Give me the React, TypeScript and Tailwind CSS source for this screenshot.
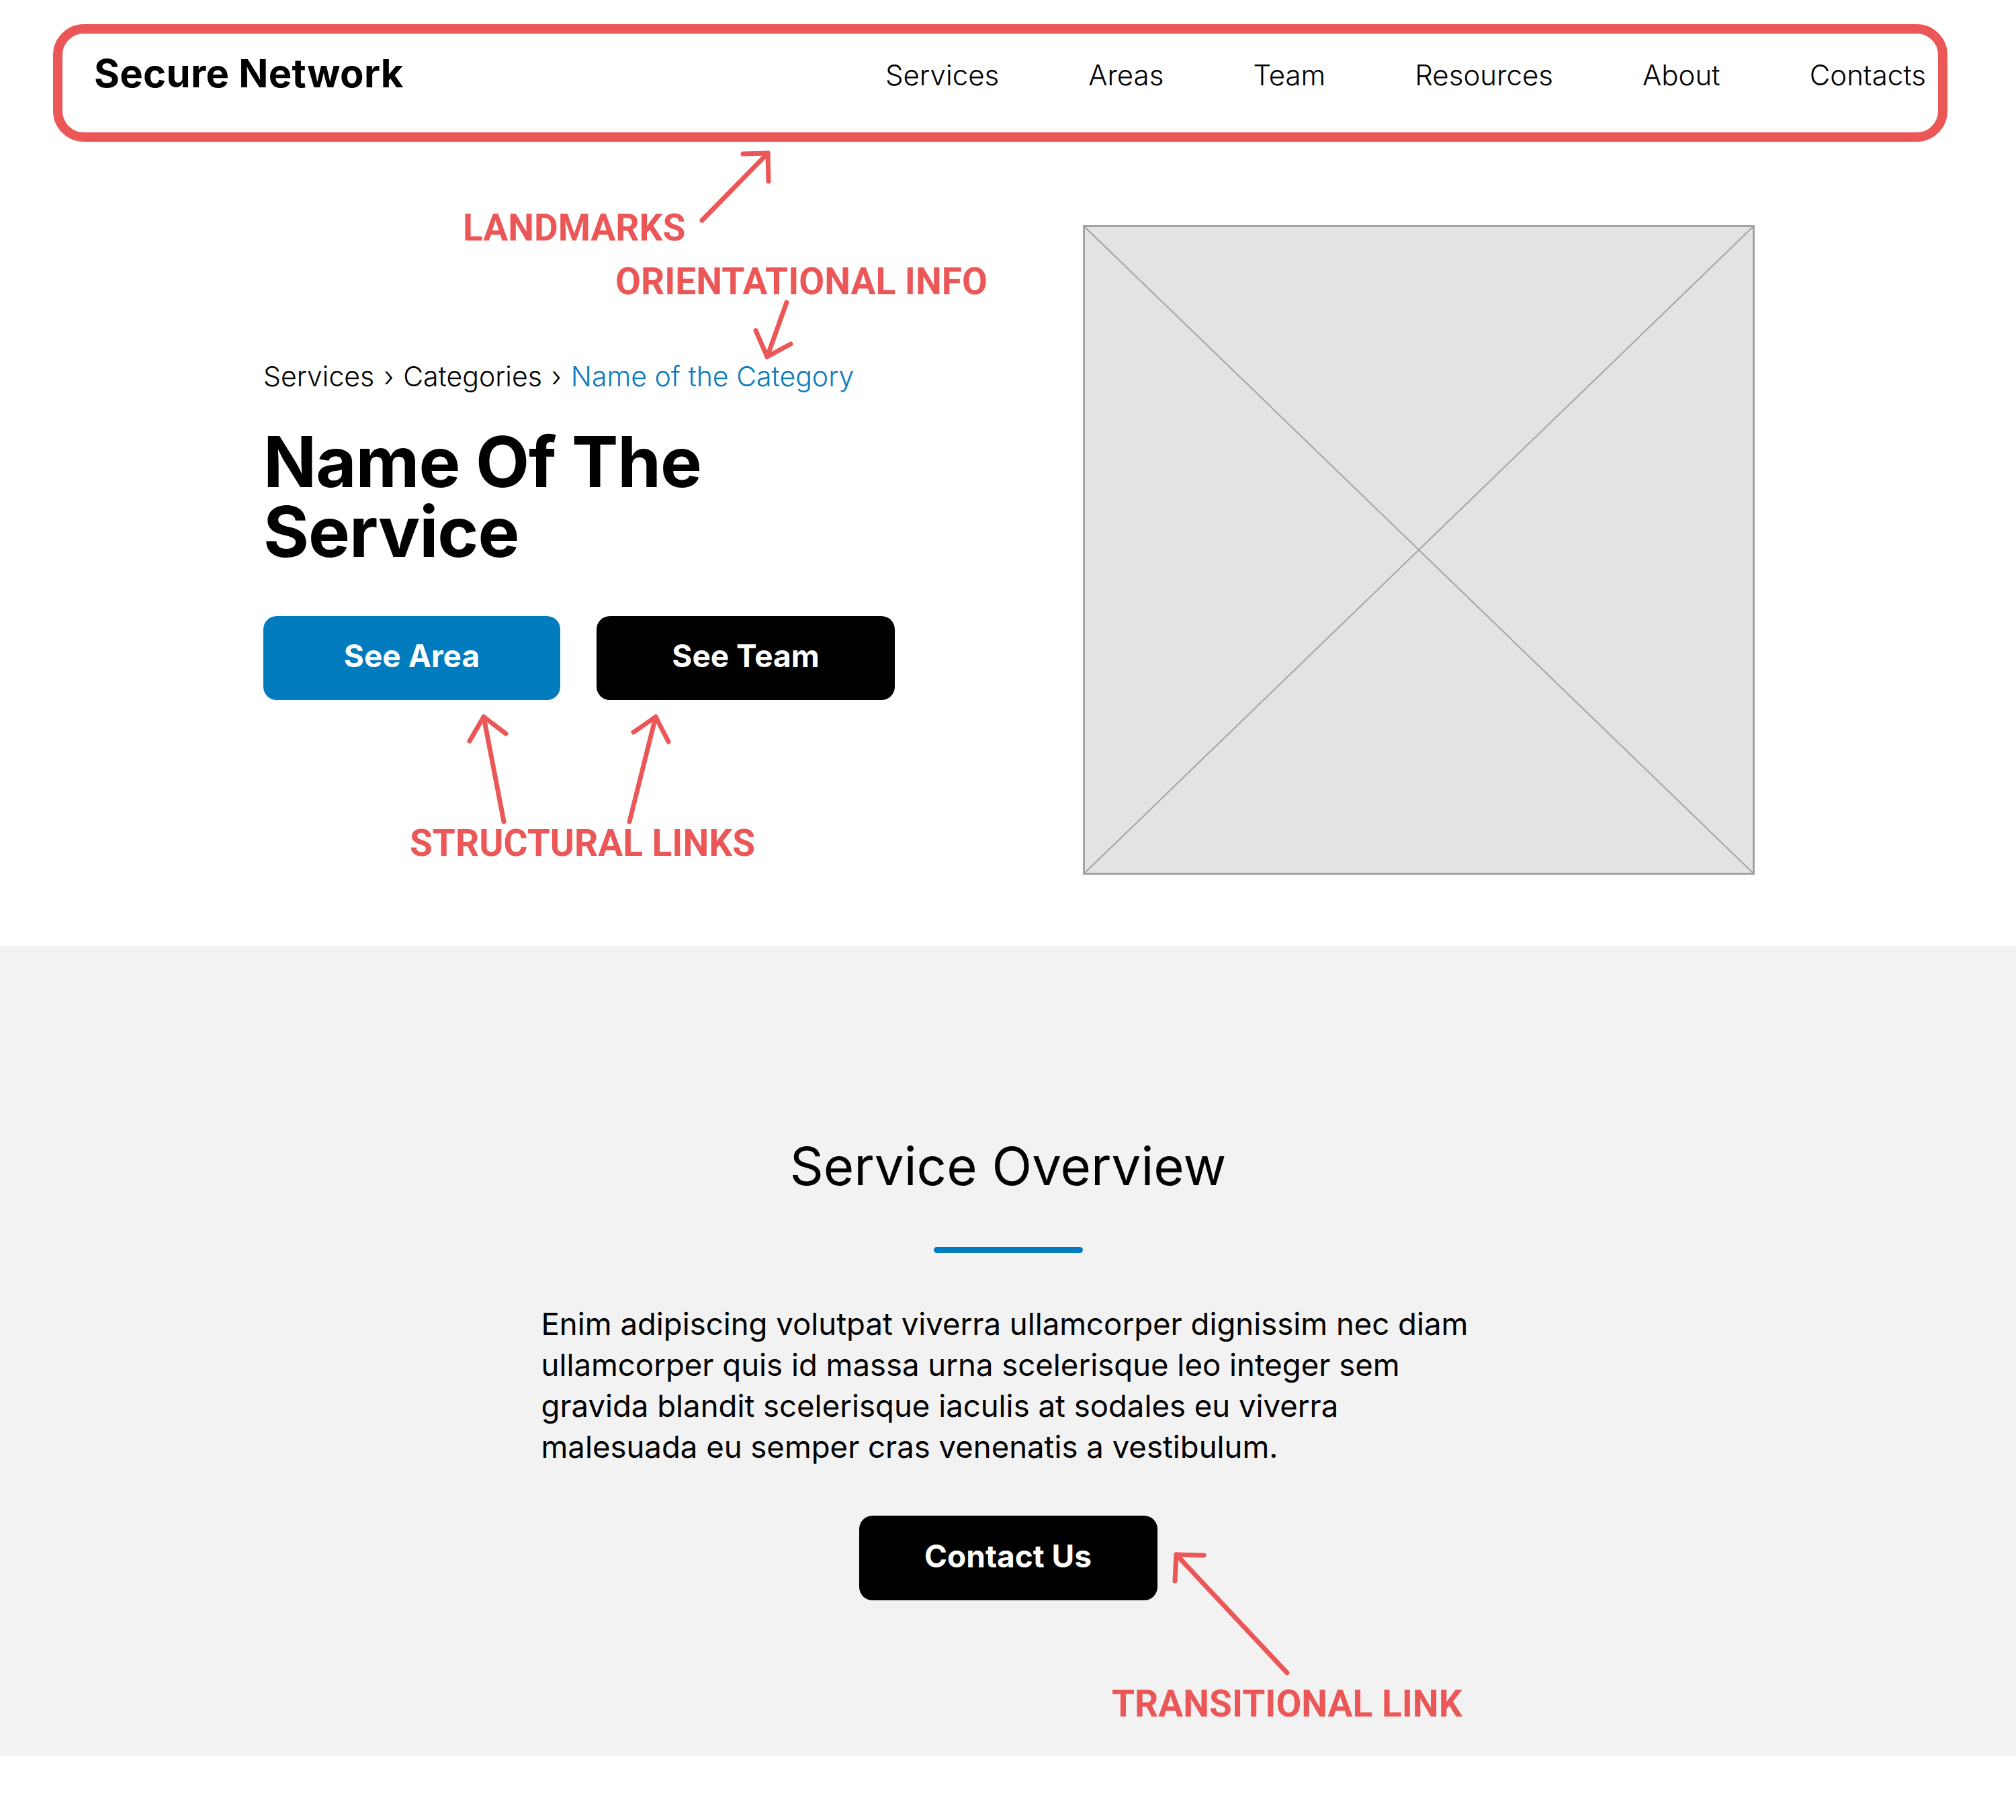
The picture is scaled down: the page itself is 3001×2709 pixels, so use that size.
import React from 'react';

const navItems = ['Services', 'Areas', 'Team', 'Resources', 'About', 'Contacts'];

const RED = '#eb5757';

// Annotation arrows: [shaft start, tip, arm A, arm B]
const arrows: number[][] = [
  [1045, 328, 1143, 228, 1106, 229, 1144, 270],
  [1171, 450, 1142, 531, 1125, 492, 1177, 512],
  [750, 1223, 720, 1067, 699, 1103, 753, 1092],
  [937, 1223, 976, 1067, 943, 1090, 995, 1104],
  [1916, 2490, 1751, 2314, 1792, 2315, 1749, 2353],
];

const Note: React.FC<{ className: string; children: React.ReactNode }> = ({ className, children }) => (
  <div
    className={`absolute font-['Roboto',sans-serif] font-bold text-[55px] leading-none text-[#eb5757] whitespace-nowrap ${className}`}
  >
    {children}
  </div>
);

export default function App() {
  return (
    <div className="relative w-[3001px] min-h-[2709px] bg-white text-black font-['Inter',sans-serif]">
      {/* Header (landmarks) */}
      <div className="pt-[36px] pl-[79px]">
        <header className="w-[2820px] h-[175px] border-[14px] border-[#eb5757] rounded-[46px] flex items-center justify-between pl-[47px] pr-[18px] pb-[30px]">
          <div className="text-[58px] font-bold leading-none tracking-[0.005em]">Secure Network</div>
          <nav className="flex gap-[133px] mt-[6px]">
            {navItems.map((item) => (
              <a key={item} className="text-[42px] font-light leading-none">
                {item}
              </a>
            ))}
          </nav>
        </header>
      </div>

      {/* Hero */}
      <section className="flex justify-between pl-[392px] pr-[389px] pt-[124px] pb-[106px]">
        <div className="mt-[201px] flex flex-col">
          <div className="text-[41px] leading-[48px] font-light whitespace-nowrap">
            Services<span className="mx-[14px]">›</span>Categories<span className="mx-[14px]">›</span>
            <span className="text-[#0a7bc0]">Name of the Category</span>
          </div>
          <h1 className="mt-[51px] text-[104px] leading-[104px] font-bold tracking-[-0.01em]">
            Name Of The
            <br />
            Service
          </h1>
          <div className="mt-[74px] flex gap-[54px]">
            <button className="w-[442px] h-[125px] rounded-[20px] bg-[#007bbe] text-white text-[46px] font-bold pb-[6px]">
              See Area
            </button>
            <button className="w-[444px] h-[125px] rounded-[20px] bg-black text-white text-[46px] font-bold pb-[6px]">
              See Team
            </button>
          </div>
        </div>
        <div className="relative w-[1000px] h-[967px] bg-[#e3e3e3] border-[3px] border-[#a3a3a3]">
          <svg className="absolute inset-0 w-full h-full" viewBox="0 0 994 961" preserveAspectRatio="none">
            <line x1="0" y1="0" x2="994" y2="961" stroke="#a3a3a3" strokeWidth="2" />
            <line x1="994" y1="0" x2="0" y2="961" stroke="#a3a3a3" strokeWidth="2" />
          </svg>
        </div>
      </section>

      {/* Overview */}
      <section className="bg-[#f2f2f2] flex flex-col items-center pt-[288px] pb-[232px]">
        <h2 className="text-[78px] leading-[80px] font-normal">Service Overview</h2>
        <div className="mt-[80px] w-[222px] h-[9px] rounded-full bg-[#007bbe]" />
        <p className="mt-[75px] w-[1390px] text-[45.5px] leading-[61px] font-normal whitespace-nowrap">
          Enim adipiscing volutpat viverra ullamcorper dignissim nec diam
          <br />
          ullamcorper quis id massa urna scelerisque leo integer sem
          <br />
          gravida blandit scelerisque iaculis at sodales eu viverra
          <br />
          malesuada eu semper cras venenatis a vestibulum.
        </p>
        <button className="mt-[72px] w-[444px] h-[126px] rounded-[20px] bg-black text-white text-[46px] font-bold pb-[6px]">
          Contact Us
        </button>
      </section>

      {/* Annotations */}
      <Note className="left-[689px] top-[312px]">LANDMARKS</Note>
      <Note className="left-[916px] top-[392px]">ORIENTATIONAL INFO</Note>
      <Note className="left-[610px] top-[1228px]">STRUCTURAL LINKS</Note>
      <Note className="left-[1655px] top-[2509px]">TRANSITIONAL LINK</Note>
      <svg className="absolute left-0 top-0 pointer-events-none" width="3001" height="2709">
        {arrows.map((a, i) => (
          <g key={i} stroke={RED} strokeWidth="7" strokeLinecap="round" strokeLinejoin="round" fill="none">
            <line x1={a[0]} y1={a[1]} x2={a[2]} y2={a[3]} />
            <polyline points={`${a[4]},${a[5]} ${a[2]},${a[3]} ${a[6]},${a[7]}`} />
          </g>
        ))}
      </svg>
    </div>
  );
}
